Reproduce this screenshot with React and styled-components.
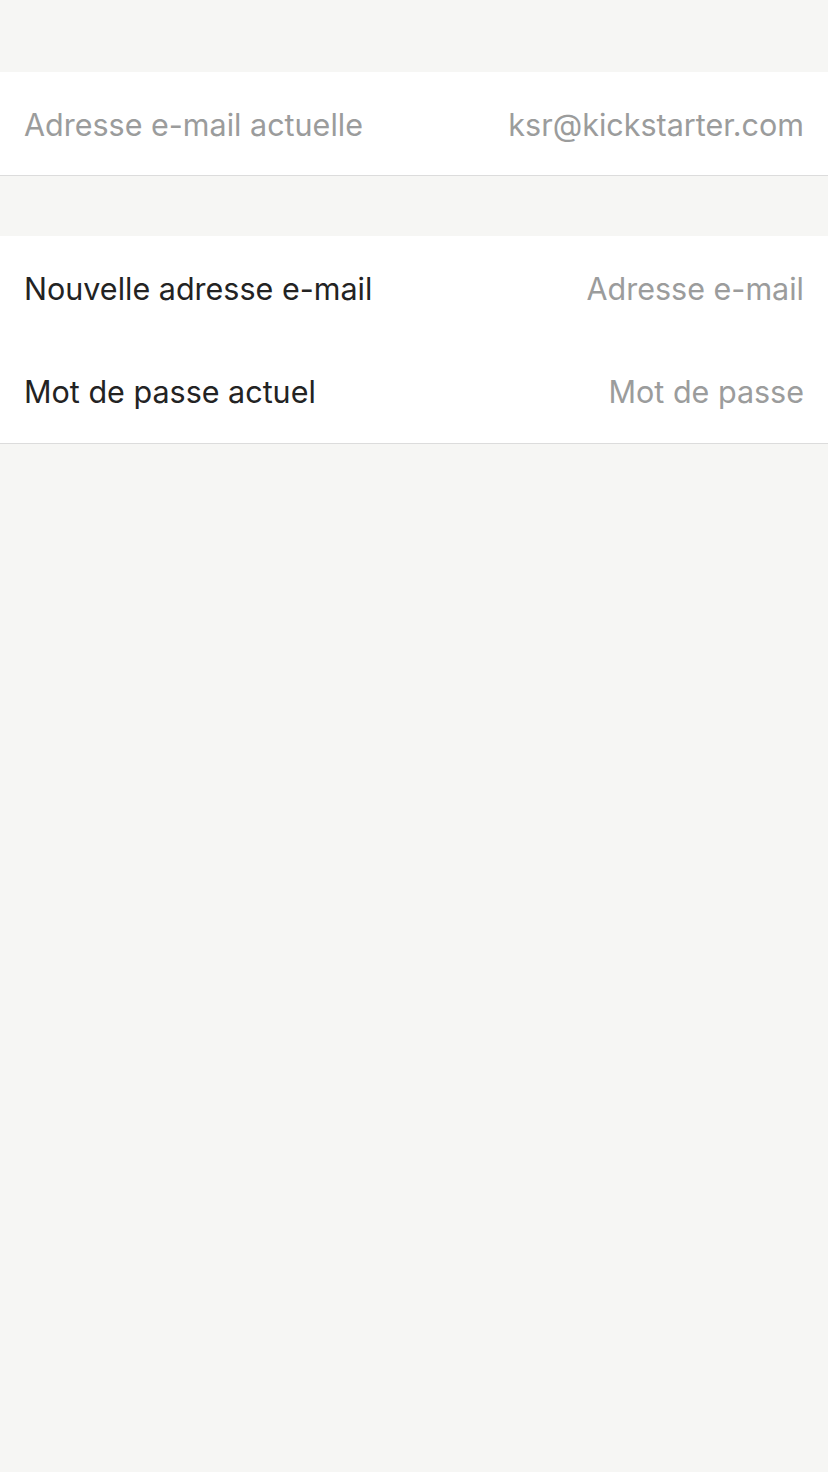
import React from "react";
import styled, { createGlobalStyle } from "styled-components";

const Global = createGlobalStyle`
  html, body { margin: 0; padding: 0; background: #f6f6f4; }
  body { font-family: Inter, "Noto Sans", sans-serif; -webkit-font-smoothing: antialiased; }
  * { box-sizing: border-box; }
`;

const Page = styled.div`
  min-height: 1472px;
  background: #f6f6f4;
  padding-top: 72px;
  display: flex;
  flex-direction: column;
  gap: 60px;
`;

const Section = styled.div`
  background: #ffffff;
  border-bottom: 1px solid #dcdcdc;
  display: flex;
  flex-direction: column;
`;

const Row = styled.div`
  height: ${(p) => p.$h || 103}px;
  display: flex;
  align-items: center;
  justify-content: space-between;
  padding: 3px 24px 0 24px;
  font-size: 30.5px;
  line-height: 1;
`;

const Label = styled.span`
  color: ${(p) => (p.$muted ? "#9b9c9c" : "#232323")};
`;

const Value = styled.span`
  color: #9b9c9c;
`;

export default function App() {
  return (
    <>
      <Global />
      <Page>
        <Section>
          <Row>
            <Label $muted>Adresse e-mail actuelle</Label>
            <Value>ksr@kickstarter.com</Value>
          </Row>
        </Section>
        <Section>
          <Row>
            <Label>Nouvelle adresse e-mail</Label>
            <Value>Adresse e-mail</Value>
          </Row>
          <Row $h={104}>
            <Label>Mot de passe actuel</Label>
            <Value>Mot de passe</Value>
          </Row>
        </Section>
      </Page>
    </>
  );
}
